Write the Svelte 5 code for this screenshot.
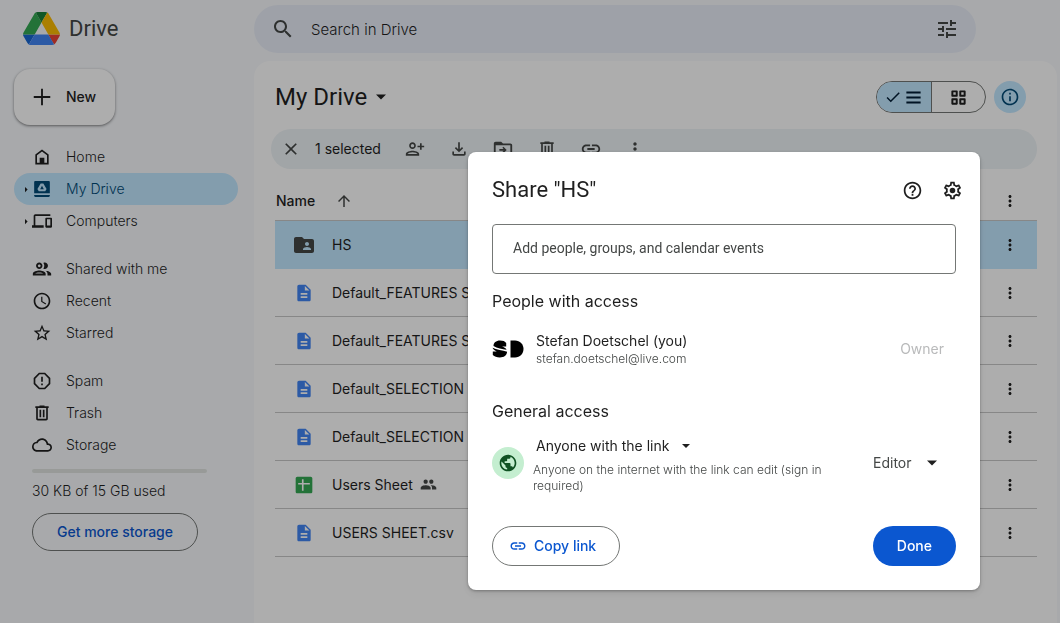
<script>
	const nav = [
		[
			{ id: 'home', label: 'Home' },
			{ id: 'mydrive', label: 'My Drive', expandable: true },
			{ id: 'computers', label: 'Computers', expandable: true }
		],
		[
			{ id: 'people', label: 'Shared with me', size: 22 },
			{ id: 'recent', label: 'Recent' },
			{ id: 'star', label: 'Starred' }
		],
		[
			{ id: 'spam', label: 'Spam' },
			{ id: 'trash', label: 'Trash' },
			{ id: 'cloud', label: 'Storage' }
		]
	];

	const files = [
		{ name: 'HS', type: 'folder' },
		{ name: 'Default_FEATURES SHEET', type: 'doc' },
		{ name: 'Default_FEATURES SHEET', type: 'doc' },
		{ name: 'Default_SELECTION SHEET', type: 'doc' },
		{ name: 'Default_SELECTION SHEET', type: 'doc' },
		{ name: 'Users Sheet', type: 'sheet', shared: true },
		{ name: 'USERS SHEET.csv', type: 'doc' }
	];

	const actions = [
		{ id: 'personAdd', label: 'Share', size: 20 },
		{ id: 'download', label: 'Download', size: 20 },
		{ id: 'move', label: 'Move', size: 22 },
		{ id: 'trash', label: 'Move to trash', size: 20 },
		{ id: 'link', label: 'Get link', size: 22 },
		{ id: 'more', label: 'More actions', size: 20 }
	];

	const icons = {
		home: 'M12 3L4 9v12h16V9l-8-6zM12 5.500L18 10v9h-3.200v-6H9.200v6H6v-9l6-4.500z',
		mydrive: 'M4 2.500h16c.8 0 1.400.6 1.400 1.400V17H2.600V3.900c0-.8.6-1.400 1.400-1.400zM10.400 5.500L6.500 12l1.600 2.800h7.800l1.600-2.800-3.900-6.500h-3.200zM12 8.200l2.200 4H9.800l2.200-4zM2.600 19.300h18.800v.9c0 .8-.6 1.400-1.400 1.400H4c-.8 0-1.400-.6-1.400-1.400z',
		computers: 'M4 6h18V4H4c-1.100 0-2 .9-2 2v11H0v3h14v-3H4V6zm19 2h-6c-.55 0-1 .45-1 1v10c0 .55.45 1 1 1h6c.55 0 1-.45 1-1V9c0-.55-.45-1-1-1zm-1 9.500h-4V10h4v7.500z',
		people: 'M9 13.750c-2.340 0-7 1.170-7 3.500V19h14v-1.750c0-2.330-4.660-3.500-7-3.500zM4.340 17c.84-.58 2.870-1.250 4.660-1.250s3.820.67 4.660 1.250H4.340zM9 12c1.930 0 3.500-1.570 3.500-3.500S10.930 5 9 5 5.500 6.570 5.500 8.500 7.070 12 9 12zm0-5c.83 0 1.500.67 1.500 1.500S9.830 10 9 10s-1.500-.67-1.500-1.500S8.170 7 9 7zm7.040 6.810c1.160.84 1.960 1.960 1.960 3.440V19h4v-1.750c0-2.020-3.500-3.170-5.960-3.440zM15 12c1.930 0 3.500-1.570 3.500-3.500S16.930 5 15 5c-.54 0-1.040.13-1.500.35.63.89 1 1.980 1 3.150s-.37 2.260-1 3.150c.46.22.96.35 1.500.35z',
		recent: 'M11.990 2C6.470 2 2 6.480 2 12s4.470 10 9.990 10C17.520 22 22 17.520 22 12S17.520 2 11.990 2zM12 20c-4.420 0-8-3.580-8-8s3.580-8 8-8 8 3.580 8 8-3.580 8-8 8zm.5-13H11v6l5.250 3.150.75-1.230-4.500-2.670z',
		star: 'M22 9.240l-7.190-.62L12 2 9.190 8.630 2 9.240l5.460 4.730L5.820 21 12 17.270 18.180 21l-1.630-7.030L22 9.240zM12 15.400l-3.760 2.270 1-4.280-3.320-2.880 4.380-.38L12 6.100l1.710 4.040 4.380.38-3.320 2.880 1 4.280L12 15.400z',
		spam: 'M8.300 2h7.400L22 8.300v7.400L15.700 22H8.300L2 15.700V8.300L8.300 2zm.9 2L4 9.200v5.600L9.200 20h5.600l5.200-5.200V9.200L14.800 4H9.200zM11 7h2v6h-2zM11 15h2v2h-2z',
		trash: 'M15 4V3H9v1H4v2h1v13c0 1.100.9 2 2 2h10c1.100 0 2-.9 2-2V6h1V4h-5zm2 15H7V6h10v13zM9 8h2v9H9zm4 0h2v9h-2z',
		cloud: 'M19.350 10.040C18.670 6.590 15.640 4 12 4 9.110 4 6.600 5.640 5.350 8.040 2.340 8.360 0 10.910 0 14c0 3.310 2.690 6 6 6h13c2.760 0 5-2.240 5-5 0-2.640-2.050-4.780-4.650-4.960zM19 18H6c-2.210 0-4-1.790-4-4 0-2.050 1.530-3.760 3.560-3.970l1.070-.11.5-.95C8.080 7.140 9.940 6 12 6c2.620 0 4.880 1.860 5.390 4.430l.3 1.500 1.530.11c1.560.1 2.780 1.410 2.780 2.960 0 1.650-1.350 3-3 3z',
		plus: 'M11 3h2v8h8v2h-8v8h-2v-8H3v-2h8z',
		caretRight: 'M8 5l7 7-7 7z',
		caretDown: 'M6 9l6 6 6-6z',
		search: 'M15.500 14h-.79l-.28-.27C15.410 12.590 16 11.110 16 9.500 16 5.910 13.090 3 9.500 3S3 5.910 3 9.500 5.910 16 9.500 16c1.610 0 3.090-.59 4.230-1.570l.27.28v.79l5 4.990L20.490 19l-4.990-5zm-6 0C7.010 14 5 11.990 5 9.500S7.010 5 9.500 5 14 7.010 14 9.500 11.990 14 9.500 14z',
		tune: 'M3 17v2h6v-2H3zM3 5v2h10V5H3zm10 16v-2h8v-2h-8v-2h-2v6h2zM7 9v2H3v2h4v2h2V9H7zm14 4v-2H11v2h10zm-6-4h2V7h4V5h-4V3h-2v6z',
		check: 'M9 16.200L4.800 12l-1.400 1.400L9 19 21 7l-1.400-1.400L9 16.200z',
		list: 'M3 4.500h18v2.500H3zM3 10.700h18v2.500H3zM3 17h18v2.500H3z',
		grid: 'M4 3h6c.6 0 1 .4 1 1v6c0 .6-.4 1-1 1H4c-.6 0-1-.4-1-1V4c0-.6.4-1 1-1zm1.500 2.500v3h3v-3zM14 3h6c.6 0 1 .4 1 1v6c0 .6-.4 1-1 1h-6c-.6 0-1-.4-1-1V4c0-.6.4-1 1-1zm1.500 2.500v3h3v-3zM4 13h6c.6 0 1 .4 1 1v6c0 .6-.4 1-1 1H4c-.6 0-1-.4-1-1v-6c0-.6.4-1 1-1zm1.500 2.500v3h3v-3zM14 13h6c.6 0 1 .4 1 1v6c0 .6-.4 1-1 1h-6c-.6 0-1-.4-1-1v-6c0-.6.4-1 1-1zm1.500 2.500v3h3v-3z',
		info: 'M11 7h2v2h-2zm0 4h2v6h-2zm1-9C6.480 2 2 6.480 2 12s4.480 10 10 10 10-4.480 10-10S17.520 2 12 2zm0 18c-4.410 0-8-3.590-8-8s3.590-8 8-8 8 3.590 8 8-3.590 8-8 8z',
		close: 'M19 6.410L17.590 5 12 10.590 6.410 5 5 6.410 10.590 12 5 17.590 6.410 19 12 13.410 17.590 19 19 17.590 13.410 12z',
		personAdd: 'M9 12c2.200 0 4-1.800 4-4s-1.800-4-4-4-4 1.800-4 4 1.800 4 4 4zm0-6c1.100 0 2 .9 2 2s-.9 2-2 2-2-.9-2-2 .9-2 2-2zM9 14c-2.700 0-8 1.300-8 4v2h16v-2c0-2.700-5.300-4-8-4zm6 4H3c.2-.7 3.300-2 6-2s5.800 1.300 6 2zM18 5h2v3h3v2h-3v3h-2v-3h-3V8h3z',
		download: 'M11 4h2v8.200l2.600-2.600L17 11l-5 5-5-5 1.400-1.400 2.600 2.600zM4 15h2v3h12v-3h2v3c0 1.100-.9 2-2 2H6c-1.100 0-2-.9-2-2z',
		move: 'M20 6h-8l-2-2H4c-1.100 0-2 .9-2 2v12c0 1.100.9 2 2 2h16c1.100 0 2-.9 2-2V8c0-1.100-.9-2-2-2zm0 12H4V8h16v10zm-7.500-1.500L16 13l-3.500-3.500-1.200 1.200 1.400 1.400H8v1.800h4.700l-1.400 1.400z',
		link: 'M3.900 12c0-1.710 1.390-3.100 3.100-3.100h4V7H7c-2.760 0-5 2.240-5 5s2.240 5 5 5h4v-1.900H7c-1.710 0-3.100-1.390-3.100-3.100zM8 13h8v-2H8v2zm9-6h-4v1.900h4c1.710 0 3.100 1.390 3.100 3.100s-1.390 3.100-3.100 3.100h-4V17h4c2.760 0 5-2.240 5-5s-2.240-5-5-5z',
		more: 'M12 8c1.100 0 2-.9 2-2s-.9-2-2-2-2 .9-2 2 .9 2 2 2zm0 2c-1.100 0-2 .9-2 2s.9 2 2 2 2-.9 2-2-.9-2-2-2zm0 6c-1.100 0-2 .9-2 2s.9 2 2 2 2-.9 2-2-.9-2-2-2z',
		arrowUp: 'M4 12l1.410 1.410L11 7.830V20h2V7.830l5.580 5.590L20 12l-8-8-8 8z',
		folder: 'M20 6h-8l-2-2H4c-1.100 0-2 .9-2 2v12c0 1.100.9 2 2 2h16c1.100 0 2-.9 2-2V8c0-1.100-.9-2-2-2zm-5 3c1.100 0 2 .9 2 2s-.9 2-2 2-2-.9-2-2 .9-2 2-2zm4 8h-8v-1c0-1.330 2.670-2 4-2s4 .67 4 2v1z',
		doc: 'M14 2H6c-1.100 0-2 .9-2 2v16c0 1.100.9 2 2 2h12c1.100 0 2-.9 2-2V8l-6-6zm2 16H8v-2h8v2zm0-4H8v-2h8v2zm-3-5V3.500L18.500 9H13z',
		sheet: 'M4 2h16c1.100 0 2 .9 2 2v16c0 1.100-.9 2-2 2H4c-1.100 0-2-.9-2-2V4c0-1.100.9-2 2-2zm5.500 3v4.500H5v2h4.500V19h2v-7.500H19v-2h-7.500V5z',
		group: 'M16 11c1.660 0 2.990-1.340 2.990-3S17.660 5 16 5s-3 1.340-3 3 1.340 3 3 3zm-8 0c1.660 0 2.990-1.340 2.990-3S9.660 5 8 5 5 6.340 5 8s1.340 3 3 3zm0 2c-2.330 0-7 1.170-7 3.500V19h14v-2.500c0-2.330-4.670-3.500-7-3.500zm8 0c-.29 0-.62.02-.97.05 1.160.84 1.970 1.970 1.970 3.450V19h6v-2.500c0-2.330-4.670-3.500-7-3.500z',
		help: 'M11 18h2v-2h-2v2zm1-16C6.480 2 2 6.480 2 12s4.480 10 10 10 10-4.480 10-10S17.520 2 12 2zm0 18c-4.410 0-8-3.590-8-8s3.590-8 8-8 8 3.590 8 8-3.590 8-8 8zm0-14c-2.210 0-4 1.790-4 4h2c0-1.100.9-2 2-2s2 .9 2 2c0 2-3 1.750-3 5h2c0-2.250 3-2.500 3-5 0-2.210-1.790-4-4-4z',
		gear: 'M19.430 12.980c.04-.32.07-.64.07-.98s-.03-.66-.07-.98l2.110-1.650c.19-.15.24-.42.12-.64l-2-3.460c-.09-.16-.26-.25-.44-.25-.06 0-.12.01-.17.03l-2.490 1c-.52-.4-1.080-.73-1.690-.98l-.38-2.650C14.460 2.180 14.250 2 14 2h-4c-.25 0-.46.18-.49.42l-.38 2.650c-.61.25-1.170.59-1.690.98l-2.490-1c-.06-.02-.12-.03-.18-.03-.17 0-.34.09-.43.25l-2 3.460c-.13.22-.07.49.12.64l2.110 1.650c-.04.32-.07.65-.07.98s.03.66.07.98l-2.110 1.650c-.19.15-.24.42-.12.64l2 3.460c.09.16.26.25.44.25.06 0 .12-.01.17-.03l2.490-1c.52.4 1.080.73 1.690.98l.38 2.650c.03.24.24.42.49.42h4c.25 0 .46-.18.49-.42l.38-2.650c.61-.25 1.170-.59 1.690-.98l2.490 1c.06.02.12.03.18.03.17 0 .34-.09.43-.25l2-3.460c.12-.22.07-.49-.12-.64l-2.110-1.650zm-1.980-1.710c.04.31.05.52.05.73s-.02.43-.05.73l-.14 1.130.89.7 1.080.84-.7 1.210-1.270-.51-1.040-.42-.9.68c-.43.32-.84.56-1.250.73l-1.060.43-.16 1.130-.2 1.350h-1.400l-.19-1.350-.16-1.130-1.060-.43c-.43-.18-.83-.41-1.230-.71l-.91-.7-1.060.43-1.270.51-.7-1.210 1.080-.84.89-.7-.14-1.130c-.03-.31-.05-.54-.05-.74s.02-.43.05-.73l.14-1.130-.89-.7-1.080-.84.7-1.210 1.270.51 1.040.42.9-.68c.43-.32.84-.56 1.250-.73l1.060-.43.16-1.130.2-1.350h1.390l.19 1.350.16 1.130 1.060.43c.43.18.83.41 1.230.71l.91.7 1.060-.43 1.270-.51.7 1.210-1.070.85-.89.7.14 1.130zM12 8.800a3.200 3.200 0 1 0 0 6.400 3.200 3.200 0 0 0 0-6.400z',
		globe: 'M12 2C6.480 2 2 6.480 2 12s4.480 10 10 10 10-4.480 10-10S17.520 2 12 2zm-1 17.930c-3.950-.49-7-3.850-7-7.930 0-.62.08-1.210.21-1.790L9 15v1c0 1.100.9 2 2 2v1.930zm6.900-2.540c-.26-.81-1-1.390-1.900-1.390h-1v-3c0-.55-.45-1-1-1H8v-2h2c.55 0 1-.45 1-1V7h2c1.100 0 2-.9 2-2v-.41c2.930 1.190 5 4.060 5 7.410 0 2.080-.8 3.970-2.100 5.390z'
	};

	let active = $state('mydrive');
	let selected = $state(0);
	let people = $state('');
	let audience = $state('Anyone with the link');
	let role = $state('Editor');
</script>

<svelte:head>
	<title>My Drive</title>
</svelte:head>

{#snippet icon(id, size = 20)}
	<svg width={size} height={size} viewBox="0 0 24 24" aria-hidden="true">
		<path d={icons[id]} fill="currentColor" fill-rule="evenodd" />
	</svg>
{/snippet}

<div class="app">
	<aside>
		<a class="brand" href="#home">
			<svg width="37" height="33" viewBox="0 0 87.3 78" aria-hidden="true">
				<path d="m6.600 66.850 3.850 6.650c.8 1.400 1.950 2.500 3.300 3.300l13.750-23.800h-27.500c0 1.550.4 3.100 1.200 4.500z" fill="#1967d2" />
				<path d="m43.650 25-13.750-23.800c-1.350.8-2.500 1.900-3.300 3.300l-25.400 44a9.060 9.060 0 0 0 -1.200 4.500h27.500z" fill="#34a853" />
				<path d="m73.550 76.800c1.350-.8 2.500-1.900 3.300-3.300l1.600-2.750 7.650-13.250c.8-1.400 1.200-2.950 1.200-4.500h-27.500l5.850 11.500z" fill="#ea4335" />
				<path d="m43.650 25 13.750-23.800c-1.350-.8-2.900-1.200-4.500-1.200h-18.500c-1.600 0-3.150.45-4.500 1.200z" fill="#188038" />
				<path d="m59.800 53h-32.300l-13.750 23.800c1.350.8 2.900 1.200 4.500 1.200h50.800c1.600 0 3.150-.45 4.500-1.200z" fill="#4285f4" />
				<path d="m73.400 26.500-12.700-22c-.8-1.400-1.950-2.500-3.300-3.300l-13.750 23.800 16.150 28h27.450c0-1.550-.4-3.100-1.200-4.500z" fill="#fbbc04" />
			</svg>
			<span>Drive</span>
		</a>

		<button class="new">{@render icon('plus', 22)}New</button>

		<nav>
			{#each nav as group}
				<div class="group">
					{#each group as item}
						<a href={`#${item.id}`} class:active={active === item.id} onclick={() => (active = item.id)}>
							<span class="caret">
								{#if item.expandable}{@render icon('caretRight', 9)}{/if}
							</span>
							<span class="glyph">{@render icon(item.id, item.size)}</span>
							{item.label}
						</a>
					{/each}
				</div>
			{/each}
		</nav>

		<div class="quota">
			<div class="bar"></div>
			<p>30 KB of 15 GB used</p>
			<button>Get more storage</button>
		</div>
	</aside>

	<div class="content">
		<label class="search">
			{@render icon('search', 24)}
			<input type="text" placeholder="Search in Drive" aria-label="Search in Drive" />
			<button class="plain" aria-label="Advanced search">{@render icon('tune', 24)}</button>
		</label>

		<main>
			<div class="heading">
				<h1>My Drive</h1>
				{@render icon('caretDown', 20)}
				<div class="toggle">
					<button class="on" aria-label="List layout">{@render icon('check', 18)}{@render icon('list', 19)}</button>
					<button aria-label="Grid layout">{@render icon('grid', 19)}</button>
				</div>
				<button class="info" aria-label="View details">{@render icon('info', 20)}</button>
			</div>

			<div class="toolbar">
				<button class="plain" aria-label="Clear selection">{@render icon('close', 20)}</button>
				<span>1 selected</span>
				{#each actions as action}
					<button class="plain" aria-label={action.label}>{@render icon(action.id, action.size)}</button>
				{/each}
			</div>

			<table>
				<thead>
					<tr>
						<th colspan="2"><span class="cell">Name {@render icon('arrowUp', 18)}</span></th>
						<th class="menu"><button class="plain" aria-label="More sorting options">{@render icon('more', 18)}</button></th>
					</tr>
				</thead>
				<tbody>
					{#each files as file, i}
						<tr class:selected={selected === i} onclick={() => (selected = i)}>
							<td class="type {file.type}">{@render icon(file.type, file.type === 'folder' ? 24 : 20)}</td>
							<td>
								<span class="cell">
									{file.name}
									{#if file.shared}{@render icon('group', 17)}{/if}
								</span>
							</td>
							<td class="menu"><button class="plain" aria-label="More actions">{@render icon('more', 18)}</button></td>
						</tr>
					{/each}
				</tbody>
			</table>
		</main>
	</div>
</div>

<div class="scrim">
	<div class="dialog" role="dialog" aria-modal="true" aria-labelledby="share-title">
		<header>
			<h2 id="share-title">Share "HS"</h2>
			<button class="plain" aria-label="Help">{@render icon('help', 21)}</button>
			<button class="plain" aria-label="Settings">{@render icon('gear', 21)}</button>
		</header>

		<input
			class="people"
			type="text"
			bind:value={people}
			placeholder="Add people, groups, and calendar events"
			aria-label="Add people, groups, and calendar events"
		/>

		<h3>People with access</h3>
		<div class="person">
			<svg width="32" height="32" viewBox="0 0 32 32" aria-hidden="true">
				<path d="M1.500 13C1.500 9.800 4 7.500 8 7.500c3 0 5 .8 6.200 2.600v3.400H10c1.800.7 3.800 1.300 4.600 3.200C10.500 16 5 15.500 1.500 13z" />
				<path d="M.5 14.800c4 2.300 10 2.200 14.600 4-.3 3.700-3.200 5.700-7.300 5.700-3 0-5.400-.9-7-2.500v-3.500h4C3 17.800 1.200 16.800.5 14.800z" />
				<path d="M18.500 7.500H23c5 0 8.500 3.700 8.500 8.500s-3.500 8.500-8.500 8.500h-4.500z" />
			</svg>
			<div class="who">
				<span class="name">Stefan Doetschel (you)</span>
				<span class="small">stefan.doetschel@live.com</span>
			</div>
			<span class="owner">Owner</span>
		</div>

		<h3>General access</h3>
		<div class="access">
			<span class="badge">{@render icon('globe', 20)}</span>
			<div class="scope">
				<label class="select">
					<select bind:value={audience} aria-label="General access">
						<option>Anyone with the link</option>
					</select>
					{@render icon('caretDown', 16)}
				</label>
				<span class="small">Anyone on the internet with the link can edit (sign in required)</span>
			</div>
			<label class="select role">
				<select bind:value={role} aria-label="Role">
					<option>Editor</option>
				</select>
				{@render icon('caretDown', 20)}
			</label>
		</div>

		<footer>
			<button class="copy">{@render icon('link', 18)}Copy link</button>
			<button class="done">Done</button>
		</footer>
	</div>
</div>

<style>
	:global(body) {
		background: #f8fafd;
		color: #1f1f1f;
		font: 14px/20px Inter, 'Liberation Sans', sans-serif;
	}

	h1,
	h2,
	h3,
	p {
		margin: 0;
		font-weight: 400;
	}

	button,
	input,
	select {
		font: inherit;
		color: inherit;
		box-sizing: border-box;
	}

	button {
		display: flex;
		align-items: center;
		justify-content: center;
		padding: 0;
		border: 0;
		background: none;
		cursor: pointer;
	}

	a {
		color: inherit;
		text-decoration: none;
	}

	svg {
		display: block;
		flex: none;
	}

	.plain {
		width: 32px;
		height: 32px;
		flex: none;
	}

	.app {
		display: flex;
		min-height: 100vh;
	}

	aside {
		width: 254px;
		flex: none;
		box-sizing: border-box;
		padding: 12px 16px 0 14px;
	}

	.brand {
		display: flex;
		align-items: center;
		gap: 9px;
		height: 33px;
		padding-left: 9px;
		color: #444746;
		font: 22px/32px Roboto, sans-serif;
	}

	.new {
		gap: 13px;
		height: 56px;
		margin: 24px 0 16px;
		padding: 0 19px 0 17px;
		border-radius: 16px;
		background: #fff;
		box-shadow: 0 1px 2px rgba(0, 0, 0, 0.3), 0 1px 3px 1px rgba(0, 0, 0, 0.15);
		font-weight: 500;
	}

	nav,
	.quota p {
		font-weight: 300;
	}

	.group {
		margin-bottom: 16px;
	}

	nav a {
		display: flex;
		align-items: center;
		height: 32px;
		padding-left: 8px;
		border-radius: 16px;
	}

	nav a.active {
		background: #c2e7ff;
		color: #004a77;
	}

	.caret {
		width: 10px;
		color: #1f1f1f;
	}

	.glyph {
		display: flex;
		justify-content: center;
		width: 20px;
		margin-right: 14px;
	}

	.quota {
		padding: 0 31px 0 18px;
		margin-top: -8px;
	}

	.bar {
		height: 4px;
		border-radius: 2px;
		background: #e1e3e1;
	}

	.quota p {
		margin: 8px 0 12px;
	}

	.quota button {
		height: 38px;
		padding: 0 24px;
		border: 1px solid #747775;
		border-radius: 19px;
		color: #0b57d0;
		font-weight: 500;
	}

	.content {
		display: flex;
		flex: 1;
		flex-direction: column;
		min-width: 0;
		padding: 5px 3px 0 0;
	}

	.search {
		display: flex;
		align-items: center;
		height: 48px;
		margin-right: 81px;
		padding: 0 13px 0 17px;
		border-radius: 24px;
		background: #e9eef8;
		color: #444746;
	}

	.search input {
		flex: 1;
		height: 24px;
		padding: 0 16px;
		border: 0;
		background: none;
		font-size: 15px;
		font-weight: 300;
		outline: none;
	}

	input::placeholder {
		color: #444746;
		opacity: 1;
	}

	.search input::placeholder {
		color: #1f1f1f;
	}

	main {
		flex: 1;
		margin-top: 8px;
		padding: 20px 20px 0 21px;
		border-radius: 16px 16px 0 0;
		background: #fff;
	}

	.heading {
		display: flex;
		align-items: center;
		gap: 4px;
		height: 32px;
	}

	h1 {
		font: 24px/32px Roboto, sans-serif;
	}

	.toggle {
		display: flex;
		box-sizing: border-box;
		width: 110px;
		height: 32px;
		margin: 0 4px 0 auto;
		overflow: hidden;
		border: 1px solid #747775;
		border-radius: 16px;
	}

	.toggle button {
		flex: 1;
		gap: 2px;
	}

	.toggle .on {
		border-right: 1px solid #747775;
		background: #c2e7ff;
		color: #001d35;
	}

	.info {
		width: 32px;
		height: 32px;
		margin-right: 11px;
		border-radius: 50%;
		background: #c2e7ff;
		color: #004a77;
	}

	.toolbar {
		display: flex;
		align-items: center;
		gap: 12px;
		height: 40px;
		margin: 16px 0 12px -4px;
		padding-left: 4px;
		border-radius: 20px;
		background: #edf3f6;
		color: #444746;
	}

	.toolbar span {
		margin: 0 6px 0 -4px;
		color: #1f1f1f;
	}

	table {
		width: 100%;
		border-collapse: collapse;
	}

	th,
	td {
		height: 47px;
		padding: 0;
		border-bottom: 1px solid #c7c7c7;
		font-weight: 400;
		text-align: left;
	}

	th {
		height: 39px;
		font-weight: 500;
	}

	.selected td {
		border-color: #c2e7ff;
		background: #c2e7ff;
	}

	.type {
		width: 57px;
	}

	.type svg {
		margin-left: 19px;
	}

	.type.folder svg {
		margin-left: 17px;
	}

	.folder {
		color: #444746;
	}

	.doc {
		color: #4285f4;
	}

	.sheet {
		color: #34a853;
	}

	.cell {
		display: flex;
		align-items: center;
		gap: 7px;
	}

	.cell svg {
		color: #444746;
	}

	th .cell {
		gap: 20px;
		padding-left: 1px;
	}

	.menu {
		width: 43px;
	}

	.scrim {
		position: fixed;
		inset: 0;
		display: flex;
		align-items: flex-start;
		justify-content: flex-end;
		padding: 152px 80px 0 0;
		background: rgba(0, 0, 0, 0.32);
	}

	.dialog {
		box-sizing: border-box;
		width: 512px;
		padding: 20px 24px 24px;
		border-radius: 8px;
		background: #fff;
		box-shadow: 0 1px 3px rgba(0, 0, 0, 0.3), 0 4px 8px rgba(0, 0, 0, 0.08);
	}

	header {
		display: flex;
		align-items: center;
		gap: 8px;
		height: 36px;
		margin-right: -12px;
	}

	h2 {
		flex: 1;
		font: 22px/32px Roboto, sans-serif;
	}

	.people {
		display: block;
		width: 100%;
		height: 50px;
		margin: 16px 0;
		padding: 0 20px 2px;
		border: 1px solid #747775;
		border-radius: 4px;
		font-family: Roboto, sans-serif;
	}

	h3 {
		font-size: 16px;
		line-height: 22px;
	}

	.person {
		display: flex;
		align-items: center;
		gap: 12px;
		margin: 19px 0 33px;
	}

	.who {
		display: flex;
		flex: 1;
		flex-direction: column;
	}

	.small {
		color: #444746;
		font-size: 12px;
		font-weight: 300;
		line-height: 16px;
	}

	.owner {
		margin-right: 12px;
		color: #b9babb;
	}

	.access {
		display: flex;
		align-items: center;
		gap: 9px;
		margin: 10px 0 32px;
	}

	.badge {
		display: flex;
		align-items: center;
		justify-content: center;
		flex: none;
		width: 32px;
		height: 32px;
		border-radius: 50%;
		background: #c4eed0;
		color: #0f5223;
	}

	.scope {
		display: flex;
		flex-direction: column;
		gap: 2px;
		width: 300px;
		margin-right: auto;
	}

	.select {
		display: flex;
		align-items: center;
		gap: 8px;
		height: 28px;
	}

	.scope .select {
		padding-left: 3px;
	}

	select {
		padding: 0;
		border: 0;
		appearance: none;
		background: none;
		outline: none;
	}

	.role {
		gap: 10px;
		margin-right: 14px;
	}

	.role select {
		color: #444746;
	}

	footer {
		display: flex;
		justify-content: space-between;
	}

	footer button {
		height: 40px;
		border-radius: 20px;
		font-weight: 500;
	}

	.copy {
		gap: 7px;
		padding: 0 23px 0 16px;
		border: 1px solid #747775;
		color: #0b57d0;
	}

	.done {
		padding: 0 24px;
		background: #0b57d0;
		color: #fff;
	}
</style>
